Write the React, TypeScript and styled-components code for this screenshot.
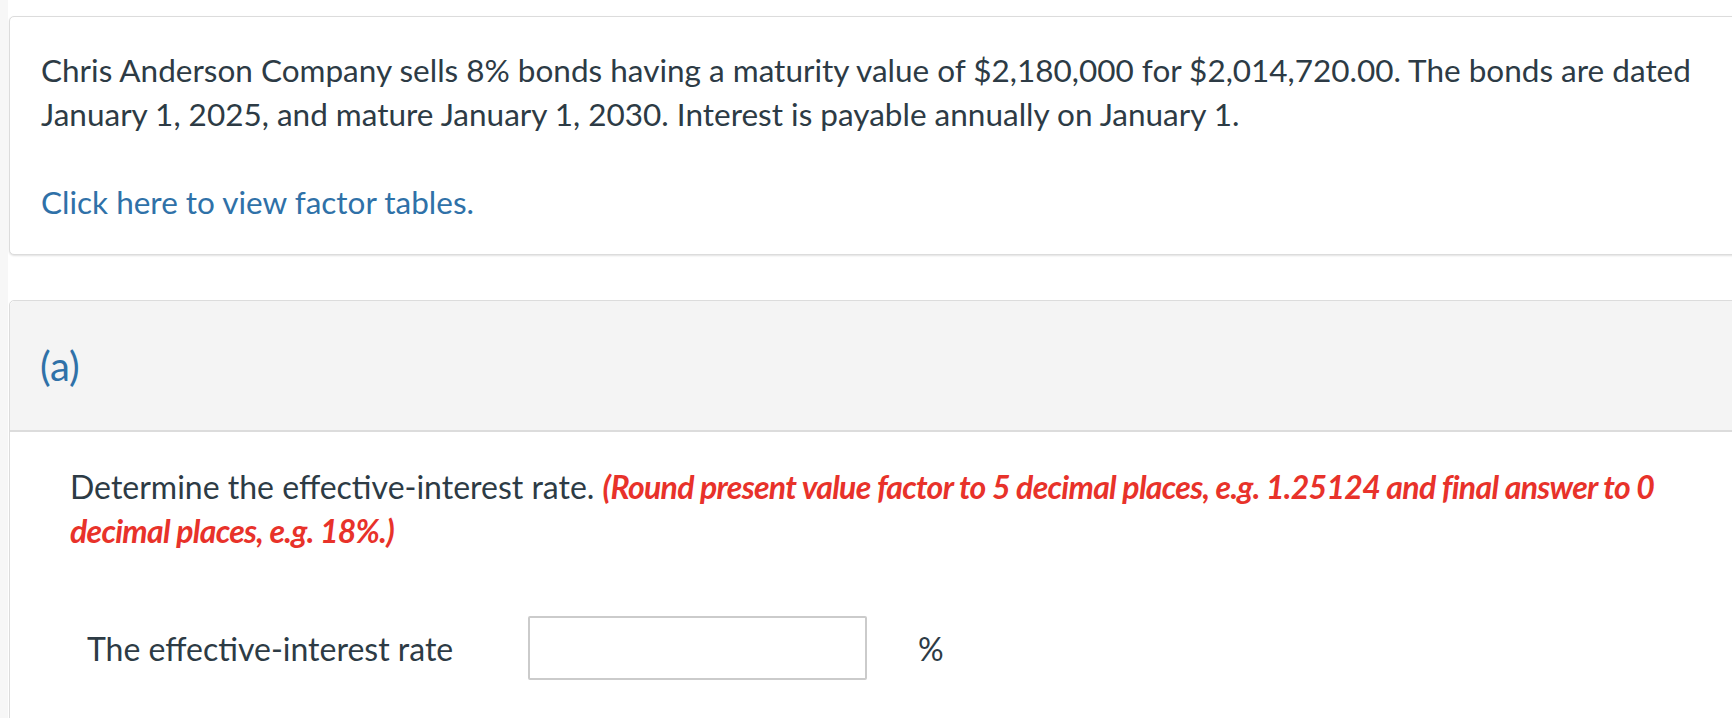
import styled, { createGlobalStyle } from "styled-components";

const GlobalStyle = createGlobalStyle`
  html, body {
    margin: 0;
    background: #f7f7f7;
  }

  body {
    font-family: Lato, "Liberation Sans", sans-serif;
    color: #2d3b45;
  }
`;

const Page = styled.div`
  margin-left: 8px;
  padding: 16px 0 0 1px;
  min-height: 100vh;
  background: #fff;
  overflow: hidden;
`;

const Card = styled.section`
  margin-right: -12px;
  border: 1px solid #dcdcdc;
  border-radius: 5px;
  background: #fff;
  box-shadow: 0 1px 2px rgba(0, 0, 0, 0.12);
`;

const Intro = styled.div`
  padding: 31px 31px 30px;
  font-size: 31.5px;
  line-height: 44px;
`;

const Paragraph = styled.p`
  margin: 0 0 44px;

  &:last-child {
    margin-bottom: 0;
  }
`;

const FactorLink = styled.a`
  color: #2f71a8;
  text-decoration: none;
  cursor: pointer;
`;

const PartCard = styled(Card)`
  margin-top: 45px;
  box-shadow: none;
`;

const PartHeader = styled.div`
  display: flex;
  align-items: center;
  height: 129px;
  padding: 0 30px;
  background: #f4f4f4;
  border-bottom: 2px solid #dcdcdc;
  border-radius: 5px 5px 0 0;
  color: #2f71a8;
  font-size: 40px;
`;

const PartBody = styled.div`
  padding: 33px 60px 60px;
`;

const Prompt = styled.p`
  margin: 0;
  font-size: 32px;
  line-height: 44px;
`;

const Hint = styled.span`
  color: #e8322a;
  font-weight: 700;
  font-style: italic;
  letter-spacing: -0.7px;
`;

const AnswerRow = styled.div`
  display: flex;
  align-items: center;
  margin-top: 63px;
  padding-left: 17px;
`;

const Label = styled.label`
  width: 441px;
  font-size: 32px;
`;

const RateInput = styled.input`
  box-sizing: border-box;
  width: 339px;
  height: 64px;
  border: 2px solid #cbcbcb;
  border-radius: 2px;
  background: #fff;
  font: inherit;
  font-size: 28px;
  padding: 0 12px;
  outline: none;
`;

const Unit = styled.span`
  margin-left: 51px;
  font-size: 32px;
`;

export default function App() {
  return (
    <>
      <GlobalStyle />
      <Page>
        <Card>
          <Intro>
            <Paragraph>
              Chris Anderson Company sells 8% bonds having a maturity value of
              $2,180,000 for $2,014,720.00. The bonds are dated January 1,
              2025, and mature January 1, 2030. Interest is payable annually on
              January 1.
            </Paragraph>
            <Paragraph>
              <FactorLink>Click here to view factor tables.</FactorLink>
            </Paragraph>
          </Intro>
        </Card>

        <PartCard>
          <PartHeader>(a)</PartHeader>
          <PartBody>
            <Prompt>
              Determine the effective-interest rate.{" "}
              <Hint>
                (Round present value factor to 5 decimal places, e.g. 1.25124
                and final answer to 0 decimal places, e.g. 18%.)
              </Hint>
            </Prompt>
            <AnswerRow>
              <Label htmlFor="rate">The effective-interest rate</Label>
              <RateInput id="rate" type="text" />
              <Unit>%</Unit>
            </AnswerRow>
          </PartBody>
        </PartCard>
      </Page>
    </>
  );
}
